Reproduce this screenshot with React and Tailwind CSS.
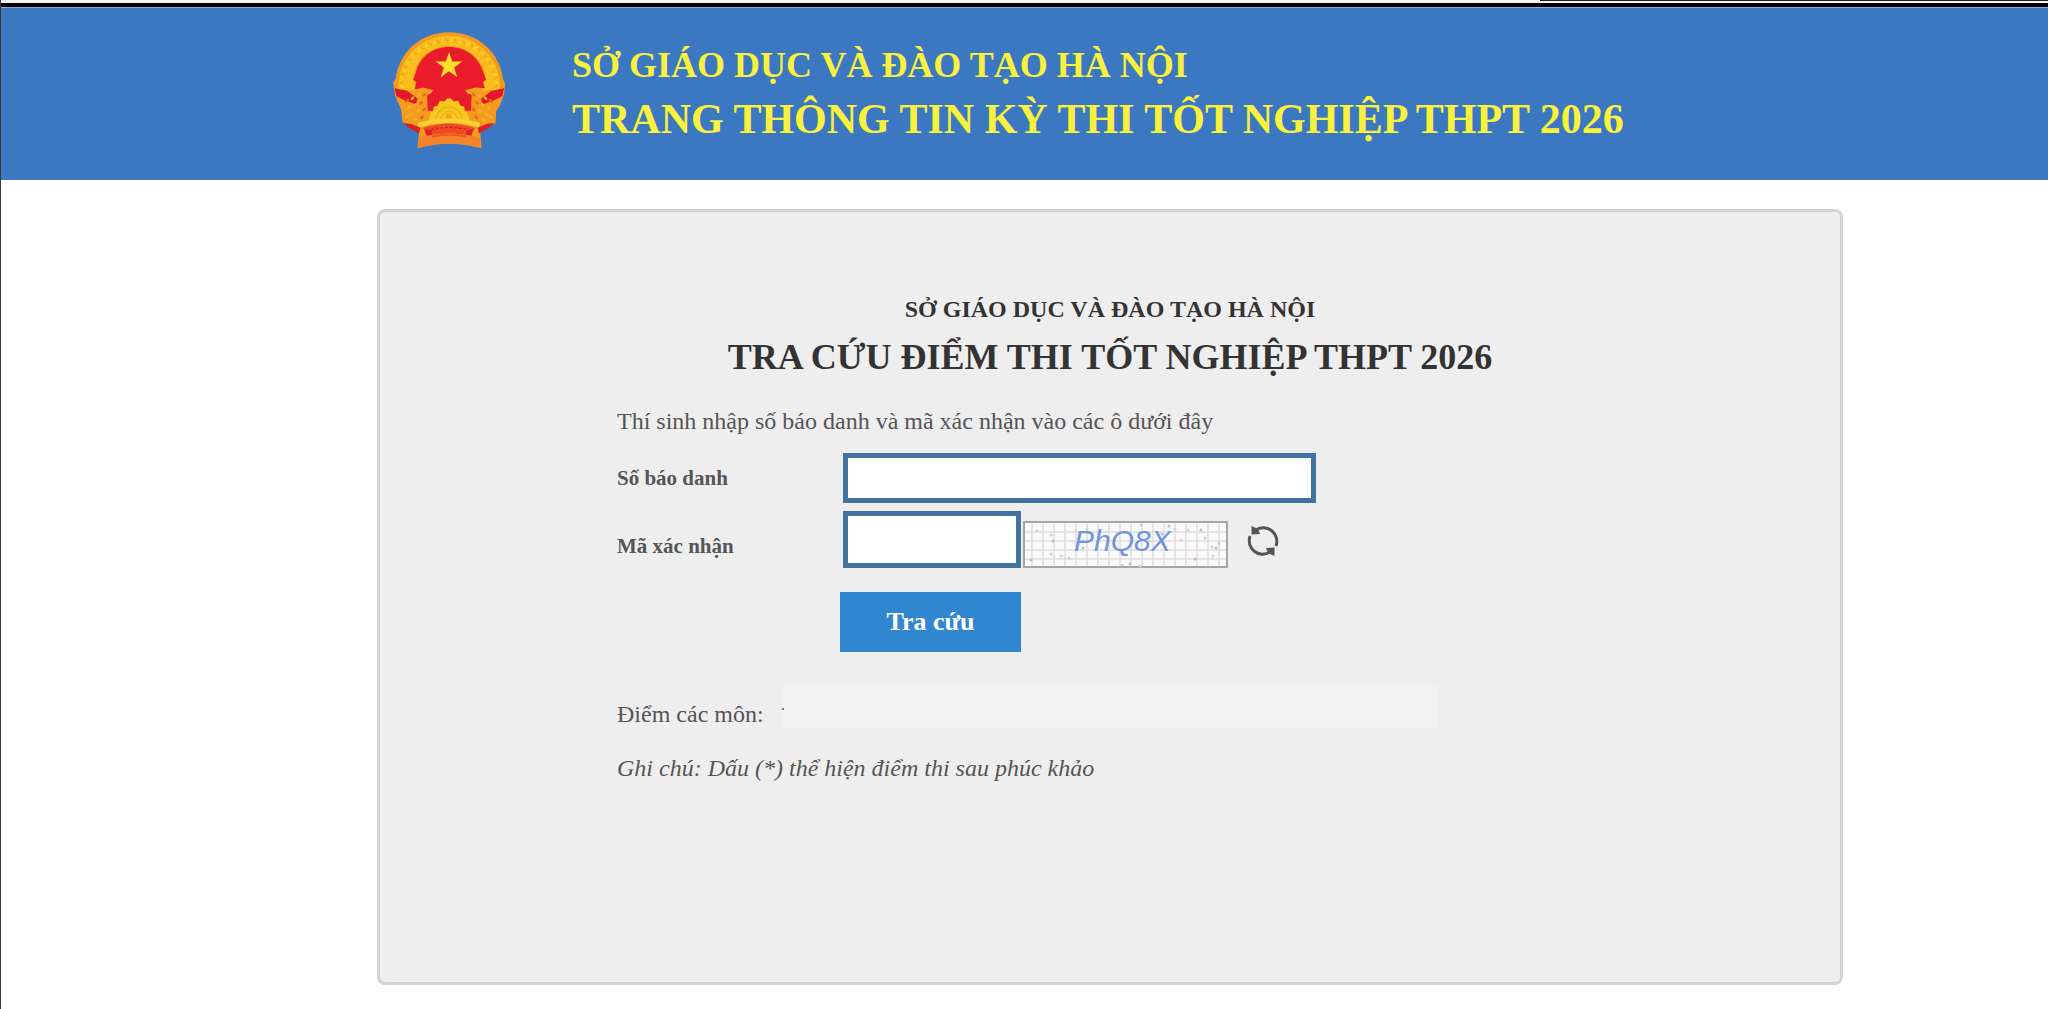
import React from "react";

const ringGrains = Array.from({ length: 38 }, (_, i) => {
  const a = Math.PI * (0.96 + (i / 37) * 1.08);
  return {
    x: 238 + Math.cos(a) * 142,
    y: 222 + Math.sin(a) * 134,
    r: (a * 180) / Math.PI + (i % 2 ? 30 : -30),
  };
});

const sheafGrains = [
  [112, 270], [128, 262], [146, 255], [164, 252], [118, 290], [136, 282], [154, 276],
  [126, 310], [146, 300], [164, 296], [112, 318], [136, 326], [156, 320], [180, 244],
];

function Emblem() {
  return (
    <svg viewBox="64 60 348 358" className="h-[119px] w-[116px]" role="img" aria-label="Quốc huy Việt Nam">
      <path
        d="M238 64 C325 64 390 125 400 202 L407 218 L404 250 L392 282 L380 302 L378 338 L352 350 L332 366 L336 413 Q238 386 143 413 L148 364 L120 350 L98 334 L94 296 L76 255 L70 216 L78 202 C88 125 152 64 238 64 Z"
        fill="#f49a1f"
      />
      <path
        d="M238 74 C316 74 378 130 390 206 L392 240 L340 238 L346 190 C334 136 290 106 238 106 C186 106 144 136 132 190 L138 238 L84 240 L88 206 C98 130 160 74 238 74 Z"
        fill="#f9be1d"
      />
      {ringGrains.map((g, i) => (
        <ellipse key={i} cx={g.x} cy={g.y} rx="8" ry="3" fill={i % 2 ? "#fbd02f" : "#f2a61e"} transform={`rotate(${g.r} ${g.x} ${g.y})`} />
      ))}
      <path
        d="M238 108 C288 108 328 138 342 186 L350 206 L340 214 L346 232 L318 230 L286 238 L306 254 L304 300 L174 300 L172 254 L192 238 L160 230 L134 236 L140 214 L130 206 L138 186 C150 138 188 108 238 108 Z"
        fill="#e81c2a"
      />
      <path d="M74 232 L112 240 L144 264 L138 280 L104 268 L80 256 Z" fill="#e2192a" />
      <path d="M404 232 L366 240 L334 264 L340 280 L374 268 L398 256 Z" fill="#e2192a" />
      {sheafGrains.map(([x, y], i) => (
        <g key={i}>
          <ellipse cx={x} cy={y} rx="7" ry="4" fill={i % 3 ? "#f8b02a" : "#e8671f"} transform={`rotate(-40 ${x} ${y})`} />
          <ellipse cx={476 - x} cy={y} rx="7" ry="4" fill={i % 3 ? "#f8b02a" : "#e8671f"} transform={`rotate(40 ${476 - x} ${y})`} />
        </g>
      ))}
      <path d="M100 336 L124 340 L152 350 L148 368 L118 352 Z" fill="#dd2027" />
      <path d="M376 336 L352 340 L324 350 L328 368 L358 352 Z" fill="#dd2027" />
      <path
        d="M176 332 L182 306 L190 302 L192 288 L204 284 L210 270 L224 272 L232 263 L244 263 L252 272 L266 270 L272 284 L284 288 L286 302 L294 306 L300 332 Z"
        fill="#f8c81f"
      />
      <path d="M198 330 A40 42 0 0 1 278 330" fill="none" stroke="#f0ac22" strokeWidth="4" />
      <path d="M212 330 A26 28 0 0 1 264 330" fill="none" stroke="#f0ac22" strokeWidth="4" />
      <circle cx="238" cy="317" r="9" fill="#f6a31f" />
      <path d="M148 350 Q140 338 150 334 Q238 312 326 334 Q336 338 328 350 Q238 324 148 350 Z" fill="#fbd034" />
      <path d="M160 352 Q238 324 316 352 L304 378 Q238 358 172 378 Z" fill="#ee4a25" />
      <path d="M184 356 Q238 344 292 356" fill="none" stroke="#c92222" strokeWidth="4" strokeDasharray="9 5" />
      <path d="M166 354 L186 360 L188 378 L172 378 Z M310 354 L290 360 L288 378 L304 378 Z" fill="#dc2126" />
      <path d="M148 380 Q238 356 330 380 L335 413 Q238 386 144 413 Z" fill="#f5832a" />
      <path d="M186 378 Q238 366 290 378" fill="none" stroke="#ee5a24" strokeWidth="7" />
      <path
        d="M238 123 L247.600 151.800 L278 152 L253.600 170.100 L262.700 199 L238 181.400 L213.300 199 L222.400 170.100 L198 152 L228.400 151.800 Z"
        fill="#fbe12d"
      />
    </svg>
  );
}

const specks = [
  [8, 39], [28, 14], [28, 33], [30, 20], [38, 35], [46, 37], [60, 27], [64, 8], [99, 44],
  [107, 43], [117, 45], [118, 4], [146, 5], [152, 8], [165, 9], [178, 9], [182, 17],
  [189, 26], [193, 27], [190, 35], [196, 22], [139, 13], [158, 19], [14, 10], [172, 38],
];

function Captcha() {
  return (
    <svg viewBox="0 0 205 47" className="ml-0.5 h-[47px] w-[205px]" role="img" aria-label="Mã xác nhận: PhQ8X">
      <rect x="1" y="1" width="203" height="45" fill="#fbfafa" stroke="#a6a6a6" strokeWidth="2" />
      {Array.from({ length: 18 }, (_, i) => (
        <path key={i} d={`M${9 + i * 11} 2V45`} stroke="#e2dcdc" strokeWidth="1.500" />
      ))}
      {[11, 20, 29, 38].map((y) => (
        <path key={y} d={`M2 ${y}H203`} stroke="#e2dcdc" strokeWidth="1.500" />
      ))}
      {specks.map(([x, y], i) => (
        <circle key={i} cx={x} cy={y} r="1.500" fill={i % 3 ? "#cfcfe2" : "#c2bdca"} />
      ))}
      <text x="51" y="30" fontFamily="Liberation Sans, Arial, sans-serif" fontStyle="italic" fontSize="30" fill="#7094dd">
        PhQ8X
      </text>
    </svg>
  );
}

function RefreshIcon() {
  return (
    <svg viewBox="0 0 34 34" className="h-[34px] w-[34px]" fill="none" stroke="#555555" strokeWidth="3" aria-hidden="true">
      <path d="M10 6 A13.500 13.500 0 0 1 30 22" />
      <path d="M24 28 A13.500 13.500 0 0 1 4 12" />
      <path d="M5.500 2 L5.500 10.500 L14 10 L12 5 Z" fill="#555555" stroke="none" />
      <path d="M28.500 32 L28.500 23.500 L20 24 L22 29 Z" fill="#555555" stroke="none" />
    </svg>
  );
}

export default function App() {
  return (
    <div className="min-h-screen border-l border-[#3a3a3a] bg-white font-['Liberation_Serif','Times_New_Roman',serif]">
      <div className="flex h-[3px] justify-end bg-[#f4f4f4]">
        <div className="h-px w-[508px] bg-[#1c1c1c]" />
      </div>
      <div className="h-[4px] bg-black" />
      <header className="flex h-[173px] items-center border-t border-[#8fa9cf] bg-[#3b78c1] pl-[390px]">
        <div className="mb-2">
          <Emblem />
        </div>
        <div className="mt-0.5 ml-[65px] font-bold whitespace-nowrap text-[#f9f13b]">
          <p className="text-[36px] leading-[48px]">SỞ GIÁO DỤC VÀ ĐÀO TẠO HÀ NỘI</p>
          <h1 className="text-[42px] leading-[60px]">TRANG THÔNG TIN KỲ THI TỐT NGHIỆP THPT 2026</h1>
        </div>
      </header>

      <main className="mt-[29px] mr-[205px] ml-[376px] rounded-lg border-3 border-[#d3d3d3] bg-[#eeeeee] pt-[81px] pb-[198px]">
        <div className="text-center font-bold text-[#333333]">
          <p className="text-[24px] leading-[32px]">SỞ GIÁO DỤC VÀ ĐÀO TẠO HÀ NỘI</p>
          <h2 className="mt-2 text-[36px] leading-[48px]">TRA CỨU ĐIỂM THI TỐT NGHIỆP THPT 2026</h2>
        </div>

        <form className="mt-6 pl-[237px] text-[#555555]" onSubmit={(e) => e.preventDefault()}>
          <p className="text-[24px] leading-[32px]">Thí sinh nhập số báo danh và mã xác nhận vào các ô dưới đây</p>

          <div className="mt-4 flex items-center">
            <label htmlFor="sbd" className="w-[226px] text-[21px] leading-[32px] font-bold">
              Số báo danh
            </label>
            <input id="sbd" type="text" className="h-[50px] w-[473px] border-5 border-[#44729f] bg-white px-3 text-[24px] outline-none" />
          </div>

          <div className="mt-2 flex items-end">
            <label htmlFor="captcha" className="mb-1.5 w-[226px] text-[21px] leading-[32px] font-bold">
              Mã xác nhận
            </label>
            <input id="captcha" type="text" className="h-[57px] w-[178px] border-5 border-[#44729f] bg-white px-3 text-[24px] outline-none" />
            <Captcha />
            <button type="button" aria-label="Đổi mã xác nhận" className="mb-2.5 ml-[18px]">
              <RefreshIcon />
            </button>
          </div>

          <button type="submit" className="mt-6 ml-[223px] h-[60px] w-[181px] bg-[#3186d0] text-[26px] leading-[32px] font-bold text-white">
            Tra cứu
          </button>

          <div className="mt-8 flex items-start text-[24px] leading-[32px]">
            <span className="w-[165px] pt-3.5">Điểm các môn:</span>
            <output className="h-[44px] w-[656px] bg-[#f1f1f1] pt-6" aria-label="Điểm các môn">
              <span className="block h-[2px] w-[2px] bg-[#777777]" />
            </output>
          </div>
          <p className="mt-[22px] text-[24px] leading-[32px] italic">Ghi chú: Dấu (*) thể hiện điểm thi sau phúc khảo</p>
        </form>
      </main>
    </div>
  );
}
